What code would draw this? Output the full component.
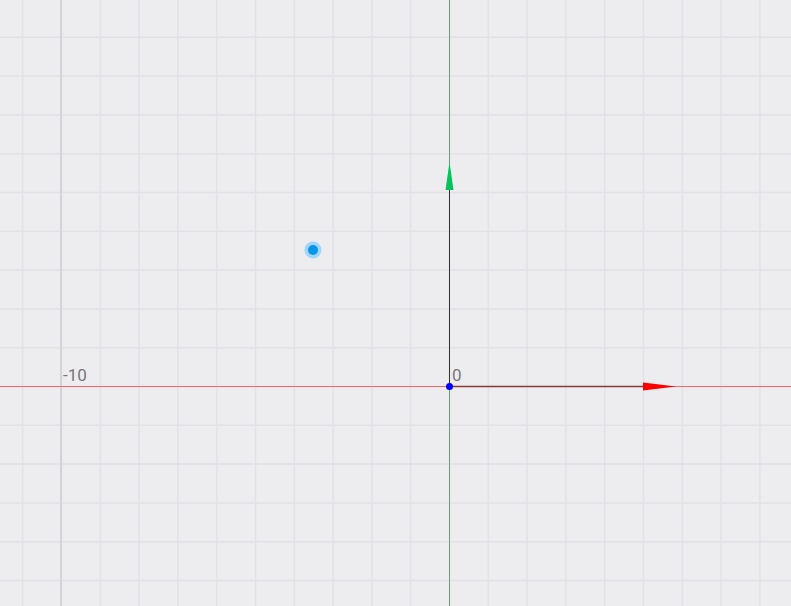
import React from 'react'

const W = 791
const H = 606
const OX = 449.5
const OY = 386.5
const STEP = 38.8

const cols = Array.from({ length: 40 }, (_, i) => OX + (i - 20) * STEP).filter((x) => x > -2 && x < W + 2)
const rows = Array.from({ length: 40 }, (_, i) => OY + (i - 20) * STEP).filter((y) => y > -2 && y < H + 2)

export default function App() {
  return (
    <div className="relative w-[791px] h-[606px] overflow-hidden bg-[#ededf0] font-['Roboto',sans-serif]">
      <svg width={W} height={H} className="absolute inset-0">
        {/* minor grid */}
        {cols.map((x) => (
          <line key={'c' + x} x1={x} y1={0} x2={x} y2={H} stroke="#e1e1e6" strokeWidth={1.5} />
        ))}
        {rows.map((y) => (
          <line key={'r' + y} x1={0} y1={y} x2={W} y2={y} stroke="#e1e1e6" strokeWidth={1.5} />
        ))}
        {/* major line at -10 */}
        <line x1={61} y1={0} x2={61} y2={H} stroke="#d3d3da" strokeWidth={2} />

        {/* axes */}
        <line x1={0} y1={OY} x2={W} y2={OY} stroke="#f26b6b" strokeWidth={1} />
        <line x1={OX} y1={0} x2={OX} y2={H} stroke="#6f9f7a" strokeWidth={1} />

        {/* vectors */}
        <line x1={OX} y1={OY} x2={OX} y2={188} stroke="#333333" strokeWidth={1} />
        <polygon points={`${OX},162 ${OX - 4},190 ${OX + 4},190`} fill="#05c25a" />
        <line x1={OX} y1={OY} x2={645} y2={OY} stroke="#8a3a3a" strokeWidth={1.5} />
        <polygon points={`676,${OY} 643,${OY - 4} 643,${OY + 4}`} fill="#ff0000" />

        {/* origin */}
        <circle cx={OX} cy={OY} r={3.5} fill="#0000ff" />

        {/* point */}
        <circle cx={313} cy={250} r={8.5} fill="#9fd6fa" />
        <circle cx={313} cy={250} r={5} fill="#0a96e8" />
      </svg>

      <div className="absolute left-[63px] top-[365px] text-[17px] leading-5 text-[#777777]">-10</div>
      <div className="absolute left-[452px] top-[365px] text-[17px] leading-5 text-[#777777]">0</div>
    </div>
  )
}
